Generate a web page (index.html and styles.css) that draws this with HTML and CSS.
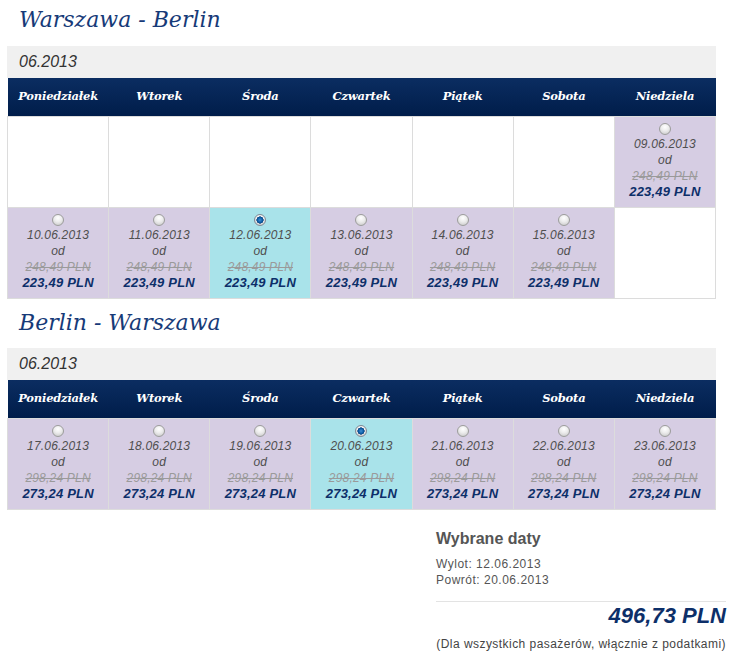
FILE: index.html
```html
<!DOCTYPE html>
<html lang="pl">
<head>
<meta charset="utf-8">
<title>Wybór daty lotu</title>
<link rel="stylesheet" href="styles.css">
</head>
<body>
<div class="page">

  <section class="leg">
    <h2 class="leg-title">Warszawa - Berlin</h2>
    <div class="month">06.2013</div>
    <table class="cal">
      <thead>
        <tr>
          <th>Poniedziałek</th><th>Wtorek</th><th>Środa</th><th>Czwartek</th><th>Piątek</th><th>Sobota</th><th>Niedziela</th>
        </tr>
      </thead>
      <tbody>
        <tr>
          <td></td><td></td><td></td><td></td><td></td><td></td>
          <td class="avail"><div class="day"><span class="radio"></span><span class="date">09.06.2013</span><span class="from">od</span><span class="old">248,49 PLN</span><span class="price">223,49 PLN</span></div></td>
        </tr>
        <tr>
          <td class="avail"><div class="day"><span class="radio"></span><span class="date">10.06.2013</span><span class="from">od</span><span class="old">248,49 PLN</span><span class="price">223,49 PLN</span></div></td>
          <td class="avail"><div class="day"><span class="radio"></span><span class="date">11.06.2013</span><span class="from">od</span><span class="old">248,49 PLN</span><span class="price">223,49 PLN</span></div></td>
          <td class="avail chosen"><div class="day"><span class="radio on"></span><span class="date">12.06.2013</span><span class="from">od</span><span class="old">248,49 PLN</span><span class="price">223,49 PLN</span></div></td>
          <td class="avail"><div class="day"><span class="radio"></span><span class="date">13.06.2013</span><span class="from">od</span><span class="old">248,49 PLN</span><span class="price">223,49 PLN</span></div></td>
          <td class="avail"><div class="day"><span class="radio"></span><span class="date">14.06.2013</span><span class="from">od</span><span class="old">248,49 PLN</span><span class="price">223,49 PLN</span></div></td>
          <td class="avail"><div class="day"><span class="radio"></span><span class="date">15.06.2013</span><span class="from">od</span><span class="old">248,49 PLN</span><span class="price">223,49 PLN</span></div></td>
          <td></td>
        </tr>
      </tbody>
    </table>
  </section>

  <section class="leg">
    <h2 class="leg-title">Berlin - Warszawa</h2>
    <div class="month">06.2013</div>
    <table class="cal">
      <thead>
        <tr>
          <th>Poniedziałek</th><th>Wtorek</th><th>Środa</th><th>Czwartek</th><th>Piątek</th><th>Sobota</th><th>Niedziela</th>
        </tr>
      </thead>
      <tbody>
        <tr>
          <td class="avail"><div class="day"><span class="radio"></span><span class="date">17.06.2013</span><span class="from">od</span><span class="old">298,24 PLN</span><span class="price">273,24 PLN</span></div></td>
          <td class="avail"><div class="day"><span class="radio"></span><span class="date">18.06.2013</span><span class="from">od</span><span class="old">298,24 PLN</span><span class="price">273,24 PLN</span></div></td>
          <td class="avail"><div class="day"><span class="radio"></span><span class="date">19.06.2013</span><span class="from">od</span><span class="old">298,24 PLN</span><span class="price">273,24 PLN</span></div></td>
          <td class="avail chosen"><div class="day"><span class="radio on"></span><span class="date">20.06.2013</span><span class="from">od</span><span class="old">298,24 PLN</span><span class="price">273,24 PLN</span></div></td>
          <td class="avail"><div class="day"><span class="radio"></span><span class="date">21.06.2013</span><span class="from">od</span><span class="old">298,24 PLN</span><span class="price">273,24 PLN</span></div></td>
          <td class="avail"><div class="day"><span class="radio"></span><span class="date">22.06.2013</span><span class="from">od</span><span class="old">298,24 PLN</span><span class="price">273,24 PLN</span></div></td>
          <td class="avail"><div class="day"><span class="radio"></span><span class="date">23.06.2013</span><span class="from">od</span><span class="old">298,24 PLN</span><span class="price">273,24 PLN</span></div></td>
        </tr>
      </tbody>
    </table>
  </section>

  <aside class="summary">
    <h3 class="summary-title">Wybrane daty</h3>
    <div class="summary-dates">
      <div>Wylot: 12.06.2013</div>
      <div>Powrót: 20.06.2013</div>
    </div>
    <div class="total">496,73 PLN</div>
    <div class="note">(Dla wszystkich pasażerów, włącznie z podatkami)</div>
  </aside>

</div>
</body>
</html>
```

FILE: styles.css
```css
html, body {
  margin: 0;
  padding: 0;
  background: #fff;
}

body {
  font-family: "Liberation Sans", Arial, sans-serif;
  color: #555;
}

.page {
  width: 719px;
  padding-left: 7px;
}

/* route heading above each calendar */
.leg-title {
  margin: 0;
  padding: 2px 12px 0;
  height: 44px;
  font: italic normal 22px/36px "DejaVu Serif", Georgia, serif;
  color: #163a78;
}

.leg + .leg .leg-title {
  padding-top: 6px;
  height: 43px;
}

.month {
  width: 697px;
  height: 32px;
  padding-left: 12px;
  background: #f0f0f0;
  font: italic 16px/32px "Liberation Sans", Arial, sans-serif;
  color: #333;
}

/* week calendar */
.cal {
  width: 709px;
  border-collapse: collapse;
  table-layout: fixed;
}

.cal th {
  height: 38px;
  padding: 0;
  background: linear-gradient(#0b2d61, #001d4a);
  color: #fff;
  font: italic bold 11.5px/1 "DejaVu Serif", Georgia, serif;
  letter-spacing: -0.2px;
  text-align: center;
}

.cal td {
  height: 90px;
  padding: 0;
  border: 1px solid #dcdcdc;
  vertical-align: top;
  text-align: center;
}

.cal td.avail {
  background: #d6cde3;
}

.cal td.chosen {
  background: #a9e3ea;
}

.day {
  padding-top: 6px;
}

.day > span {
  display: block;
  font-size: 12px;
  line-height: 16px;
  font-style: italic;
}

/* radio button drawn with CSS */
.day > .radio {
  box-sizing: border-box;
  width: 12px;
  height: 12px;
  margin: 0 auto 1px;
  border: 1px solid #9c9c9c;
  border-radius: 50%;
  background: radial-gradient(circle at 50% 30%, #ffffff 0%, #ececec 45%, #c4c4c4 100%);
}

.day > .radio.on {
  border-color: #7d8a96;
  background:
    radial-gradient(circle at 50% 50%, #3f8fd4 0, #0b5aa3 2.5px, #08447e 3.5px, transparent 3.6px),
    radial-gradient(circle at 50% 30%, #ffffff 0%, #ececec 45%, #c4c4c4 100%);
}

.day > .date,
.day > .from {
  color: #4f4f4f;
  letter-spacing: 0.2px;
}

.day > .old {
  color: #9a9a9a;
  text-decoration: line-through;
  letter-spacing: 0.2px;
}

.day > .price {
  color: #0d2f69;
  font-weight: bold;
  font-size: 13px;
  letter-spacing: 0.2px;
}

/* selection summary */
.summary {
  width: 290px;
  margin: 19px 0 0 auto;
}

.summary-title {
  margin: 0 0 7px;
  font: bold 16px/20px "Liberation Sans", Arial, sans-serif;
  color: #555;
}

.summary-dates {
  font-size: 12px;
  line-height: 16px;
  letter-spacing: 0.5px;
  color: #555;
}

.total {
  margin-top: 13px;
  border-top: 1px solid #e3e3e3;
  text-align: right;
  font: italic bold 22px/28px "Liberation Sans", Arial, sans-serif;
  color: #0d2f69;
}

.note {
  margin-top: 6px;
  text-align: right;
  font-size: 12px;
  line-height: 16px;
  letter-spacing: 0.45px;
  color: #444;
}
```
